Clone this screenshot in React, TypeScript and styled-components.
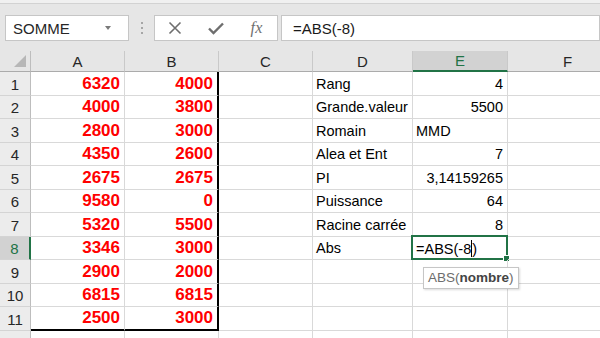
import React from "react";
import styled, { createGlobalStyle } from "styled-components";

const GlobalStyle = createGlobalStyle`
  html, body { margin: 0; padding: 0; background: #fff; }
  body { font-family: "Liberation Sans", Arial, sans-serif; }
`;

const GREEN = "#217346";

const Screen = styled.div`
  width: 600px;
  height: 338px;
  overflow: hidden;
  background: #fff;
`;

const Ribbon = styled.div`
  height: 51px;
  background: #e6e6e6;
  border-top: 3px solid #f0f0f0;
  box-sizing: border-box;
  display: flex;
  flex-direction: column;
`;

const TopLine = styled.div`
  height: 1px;
  background: #d2d2d2;
`;

const FormulaRow = styled.div`
  display: flex;
  align-items: center;
  margin-top: 11px;
  padding-left: 5px;
  height: 26px;
`;

const Box = styled.div<{ $w?: number }>`
  height: 26px;
  box-sizing: border-box;
  background: #fff;
  border: 1px solid #c6c6c6;
  display: flex;
  align-items: center;
  ${(p) => (p.$w ? `width: ${p.$w}px;` : "flex: 1;")}
`;

const NameText = styled.span`
  flex: 1;
  padding-left: 7px;
  font-size: 15px;
  color: #262626;
`;

const Caret = styled.span`
  width: 0;
  height: 0;
  margin-right: 17px;
  border-left: 3.5px solid transparent;
  border-right: 3.5px solid transparent;
  border-top: 4px solid #7a7a7a;
`;

const Grip = styled.div`
  width: 25px;
  display: flex;
  flex-direction: column;
  align-items: center;
  gap: 3px;
  span {
    width: 2px;
    height: 2px;
    background: #a6a6a6;
  }
`;

const IconButton = styled.div`
  flex: 1;
  display: flex;
  justify-content: center;
  align-items: center;
  color: #6e6e6e;
`;

const Fx = styled.span`
  font-family: "Liberation Serif", "Times New Roman", serif;
  font-style: italic;
  font-size: 16px;
  color: #6e6e6e;
  letter-spacing: 0.5px;
`;

const Spacer = styled.div`
  width: 3px;
`;

const Formula = styled.span`
  padding-left: 11px;
  font-size: 15px;
  color: #1a1a1a;
`;

const Sheet = styled.div`
  display: grid;
  grid-template-columns: 31px 94px 94px 94px 100px 95px 120px;
  grid-template-rows: 21px repeat(12, 23.5px);
`;

const Corner = styled.div`
  background: #e6e6e6;
  border-right: 1px solid #bdbdbd;
  border-bottom: 1px solid #ababab;
  box-sizing: border-box;
  position: relative;
  &::after {
    content: "";
    position: absolute;
    right: 4px;
    bottom: 4px;
    width: 0;
    height: 0;
    border-left: 12px solid transparent;
    border-bottom: 12px solid #b7b7b7;
  }
`;

const ColHead = styled.div<{ $sel?: boolean }>`
  box-sizing: border-box;
  background: ${(p) => (p.$sel ? "#d2d2d2" : "#e6e6e6")};
  border-right: 1px solid #c9c9c9;
  border-bottom: ${(p) => (p.$sel ? `2px solid ${GREEN}` : "1px solid #ababab")};
  color: ${(p) => (p.$sel ? GREEN : "#262626")};
  font-size: 15px;
  display: flex;
  align-items: center;
  justify-content: center;
`;

const RowHead = styled.div<{ $sel?: boolean }>`
  box-sizing: border-box;
  background: ${(p) => (p.$sel ? "#d2d2d2" : "#ececec")};
  border-right: ${(p) => (p.$sel ? `2px solid ${GREEN}` : "1px solid #bdbdbd")};
  border-bottom: 1px solid #d4d4d4;
  color: ${(p) => (p.$sel ? GREEN : "#262626")};
  font-size: 15px;
  display: flex;
  align-items: center;
  justify-content: center;
  padding-top: 2px;
`;

const Cell = styled.div<{ $right?: boolean; $red?: boolean; $edgeR?: boolean; $edgeB?: boolean }>`
  position: relative;
  box-sizing: border-box;
  border-right: ${(p) => (p.$edgeR ? "2px solid #000" : "1px solid #d9d9d9")};
  border-bottom: ${(p) => (p.$edgeB ? "2px solid #000" : "1px solid #d9d9d9")};
  display: flex;
  align-items: center;
  justify-content: ${(p) => (p.$right ? "flex-end" : "flex-start")};
  padding: 1px 4px 0 3px;
  white-space: nowrap;
  font-size: ${(p) => (p.$red ? "17px" : "14.5px")};
  font-weight: ${(p) => (p.$red ? 700 : 400)};
  color: ${(p) => (p.$red ? "#ff0000" : "#000")};
`;

const ActiveFrame = styled.div`
  position: absolute;
  inset: -2px -1px -1px -2px;
  border: 2px solid ${GREEN};
  pointer-events: none;
  &::after {
    content: "";
    position: absolute;
    right: -4px;
    bottom: -4px;
    width: 5px;
    height: 5px;
    background: ${GREEN};
    border: 1px solid #fff;
  }
`;

const EditCaret = styled.span`
  display: inline-block;
  width: 1px;
  height: 17px;
  background: #000;
  vertical-align: -3px;
`;

const Tip = styled.div`
  position: absolute;
  left: 10px;
  top: 30px;
  z-index: 2;
  padding: 2px 4px 3px;
  background: #fff;
  border: 1px solid #c6c6c6;
  box-shadow: 1px 1px 2px rgba(0, 0, 0, 0.15);
  font-size: 13.5px;
  color: #6d6d6d;
  b {
    color: #444;
  }
`;

const columns = ["A", "B", "C", "D", "E", "F"];

type Row = [string, string, string, string?, boolean?];

const rows: Row[] = [
  ["6320", "4000", "Rang", "4", true],
  ["4000", "3800", "Grande.valeur", "5500", true],
  ["2800", "3000", "Romain", "MMD", false],
  ["4350", "2600", "Alea et Ent", "7", true],
  ["2675", "2675", "PI", "3,14159265", true],
  ["9580", "0", "Puissance", "64", true],
  ["5320", "5500", "Racine carrée", "8", true],
  ["3346", "3000", "Abs", undefined, false],
  ["2900", "2000", ""],
  ["6815", "6815", ""],
  ["2500", "3000", ""],
];

const XIcon = () => (
  <svg width="14" height="14" viewBox="0 0 14 14">
    <path d="M1.5 1.5 L12.5 12.5 M12.5 1.5 L1.5 12.5" stroke="currentColor" strokeWidth="1.6" fill="none" />
  </svg>
);

const CheckIcon = () => (
  <svg width="16" height="13" viewBox="0 0 16 13">
    <path d="M1 6.5 L5.5 11 L15 1.5" stroke="currentColor" strokeWidth="2.4" fill="none" />
  </svg>
);

export default function App() {
  return (
    <Screen>
      <GlobalStyle />
      <Ribbon>
        <TopLine />
        <FormulaRow>
          <Box $w={124}>
            <NameText>SOMME</NameText>
            <Caret />
          </Box>
          <Grip>
            <span />
            <span />
            <span />
          </Grip>
          <Box $w={124}>
            <IconButton>
              <XIcon />
            </IconButton>
            <IconButton>
              <CheckIcon />
            </IconButton>
            <IconButton>
              <Fx>fx</Fx>
            </IconButton>
          </Box>
          <Spacer />
          <Box>
            <Formula>=ABS(-8)</Formula>
          </Box>
        </FormulaRow>
      </Ribbon>
      <Sheet>
        <Corner />
        {columns.map((c) => (
          <ColHead key={c} $sel={c === "E"}>
            {c}
          </ColHead>
        ))}
        {rows.map((r, i) => {
          const n = i + 1;
          const last = n === 11;
          return (
            <React.Fragment key={n}>
              <RowHead $sel={n === 8}>{n}</RowHead>
              <Cell $right $red $edgeB={last}>
                {r[0]}
              </Cell>
              <Cell $right $red $edgeR $edgeB={last}>
                {r[1]}
              </Cell>
              <Cell />
              <Cell>{r[2]}</Cell>
              {n === 8 ? (
                <Cell>
                  <span>
                    =ABS(-8
                    <EditCaret />)
                  </span>
                  <ActiveFrame />
                  <Tip>
                    ABS(<b>nombre</b>)
                  </Tip>
                </Cell>
              ) : (
                <Cell $right={r[4]}>{r[3]}</Cell>
              )}
              <Cell />
            </React.Fragment>
          );
        })}
        <RowHead>12</RowHead>
        {[0, 1, 2, 3, 4, 5].map((k) => (
          <Cell key={k} />
        ))}
      </Sheet>
    </Screen>
  );
}
